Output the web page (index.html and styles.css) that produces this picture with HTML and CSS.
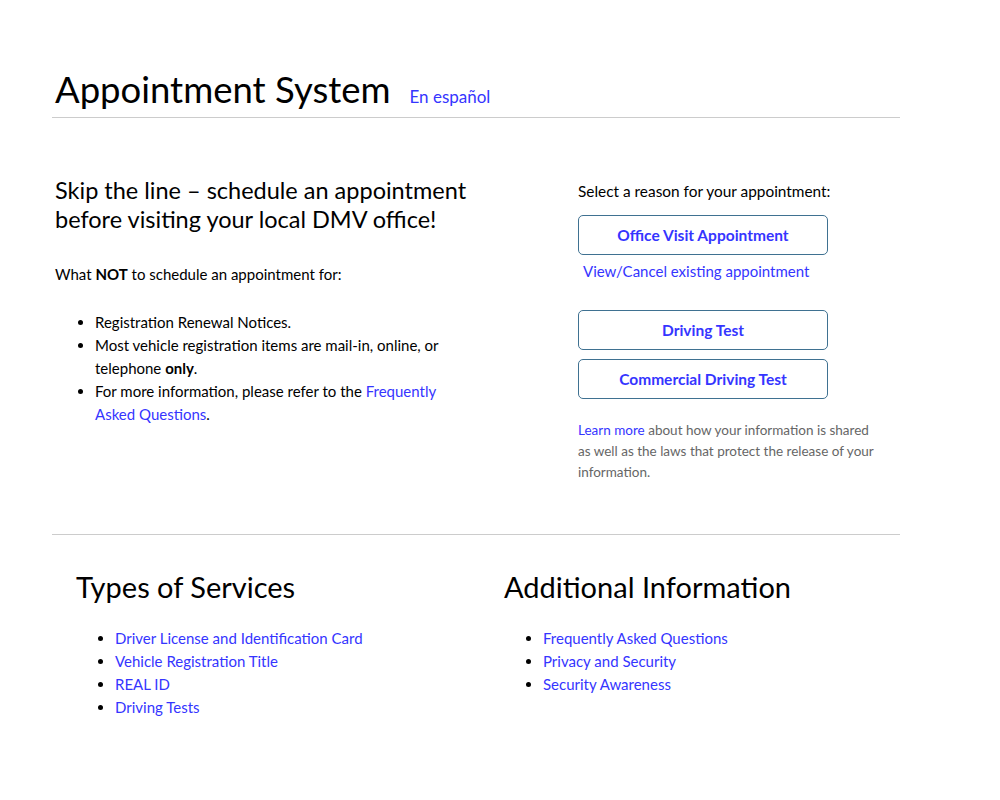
FILE: index.html
```html
<!DOCTYPE html>
<html lang="en">
<head>
<meta charset="utf-8">
<title>Appointment System</title>
<link rel="stylesheet" href="styles.css">
</head>
<body>
<div class="page">
  <header class="header">
    <h1 class="title">Appointment System</h1>
    <a class="lang" href="#">En español</a>
  </header>

  <section class="main">
    <div class="intro">
      <h2 class="lead">Skip the line – schedule an appointment before visiting your local DMV office!</h2>
      <p class="not">What <b>NOT</b> to schedule an appointment for:</p>
      <ul class="notlist">
        <li>Registration Renewal Notices.</li>
        <li>Most vehicle registration items are mail-in, online, or telephone <b>only</b>.</li>
        <li>For more information, please refer to the <a href="#">Frequently Asked Questions</a>.</li>
      </ul>
    </div>
    <div class="actions">
      <p class="select">Select a reason for your appointment:</p>
      <a class="btn btn-first" href="#">Office Visit Appointment</a>
      <a class="viewcancel" href="#">View/Cancel existing appointment</a>
      <a class="btn btn-gap" href="#">Driving Test</a>
      <a class="btn" href="#">Commercial Driving Test</a>
      <p class="privacy"><a href="#">Learn more</a> about how your information is shared as well as the laws that protect the release of your information.</p>
    </div>
  </section>

  <section class="footer">
    <div class="col">
      <h2 class="colhead">Types of Services</h2>
      <ul class="links">
        <li><a href="#">Driver License and Identification Card</a></li>
        <li><a href="#">Vehicle Registration Title</a></li>
        <li><a href="#">REAL ID</a></li>
        <li><a href="#">Driving Tests</a></li>
      </ul>
    </div>
    <div class="col">
      <h2 class="colhead">Additional Information</h2>
      <ul class="links">
        <li><a href="#">Frequently Asked Questions</a></li>
        <li><a href="#">Privacy and Security</a></li>
        <li><a href="#">Security Awareness</a></li>
      </ul>
    </div>
  </section>
</div>
</body>
</html>
```

FILE: styles.css
```css
* { box-sizing: border-box; }
html, body { margin: 0; padding: 0; background: #fff; }
body {
  font-family: Lato, "Noto Sans", "Liberation Sans", sans-serif;
  color: #000;
  font-size: 15px;
}
a { color: #3535ff; text-decoration: none; }

.page { width: 848px; margin-left: 52px; padding-top: 67px; }

.header {
  display: flex;
  align-items: baseline;
  gap: 19px;
  padding-left: 3px;
  padding-bottom: 6px;
  border-bottom: 1px solid #cccccc;
}
.title { margin: 0; font-size: 36.5px; font-weight: 400; line-height: 44px; }
.lang { font-size: 17px; }

.main {
  display: flex;
  padding: 58px 0 51px 3px;
  border-bottom: 1px solid #cccccc;
}
.intro { width: 420px; flex-shrink: 0; margin-right: 103px; }
.lead { margin: 0; font-size: 23.5px; font-weight: 400; line-height: 29px; }
.not { margin: 29px 0 0; line-height: 23px; }
.notlist { margin: 25px 0 0; padding-left: 40px; }
.notlist li { line-height: 23px; }

.actions { width: 300px; display: flex; flex-direction: column; align-items: flex-start; padding-top: 4px; }
.select { margin: 0; line-height: 23px; font-size: 15.4px; }
.btn {
  display: flex;
  align-items: center;
  justify-content: center;
  width: 250px;
  height: 40px;
  border: 1px solid #3f7191;
  border-radius: 5px;
  font-weight: 700;
  font-size: 15.5px;
}
.btn-first { margin-top: 12px; }
.viewcancel { margin: 6px 0 0 5px; font-size: 15px; line-height: 20px; }
.btn-gap { margin-top: 29px; margin-bottom: 9px; }
.privacy { margin: 21px 0 0; font-size: 13.5px; line-height: 21px; color: #666666; width: 300px; }

.footer { display: flex; padding: 32px 0 0 24px; }
.col { width: 428px; flex-shrink: 0; }
.col + .col { width: auto; flex: 1; }
.colhead { margin: 0; font-size: 29px; font-weight: 400; line-height: 40px; }
.links { margin: 20px 0 0; padding-left: 39px; }
.links li { line-height: 23px; }
```
